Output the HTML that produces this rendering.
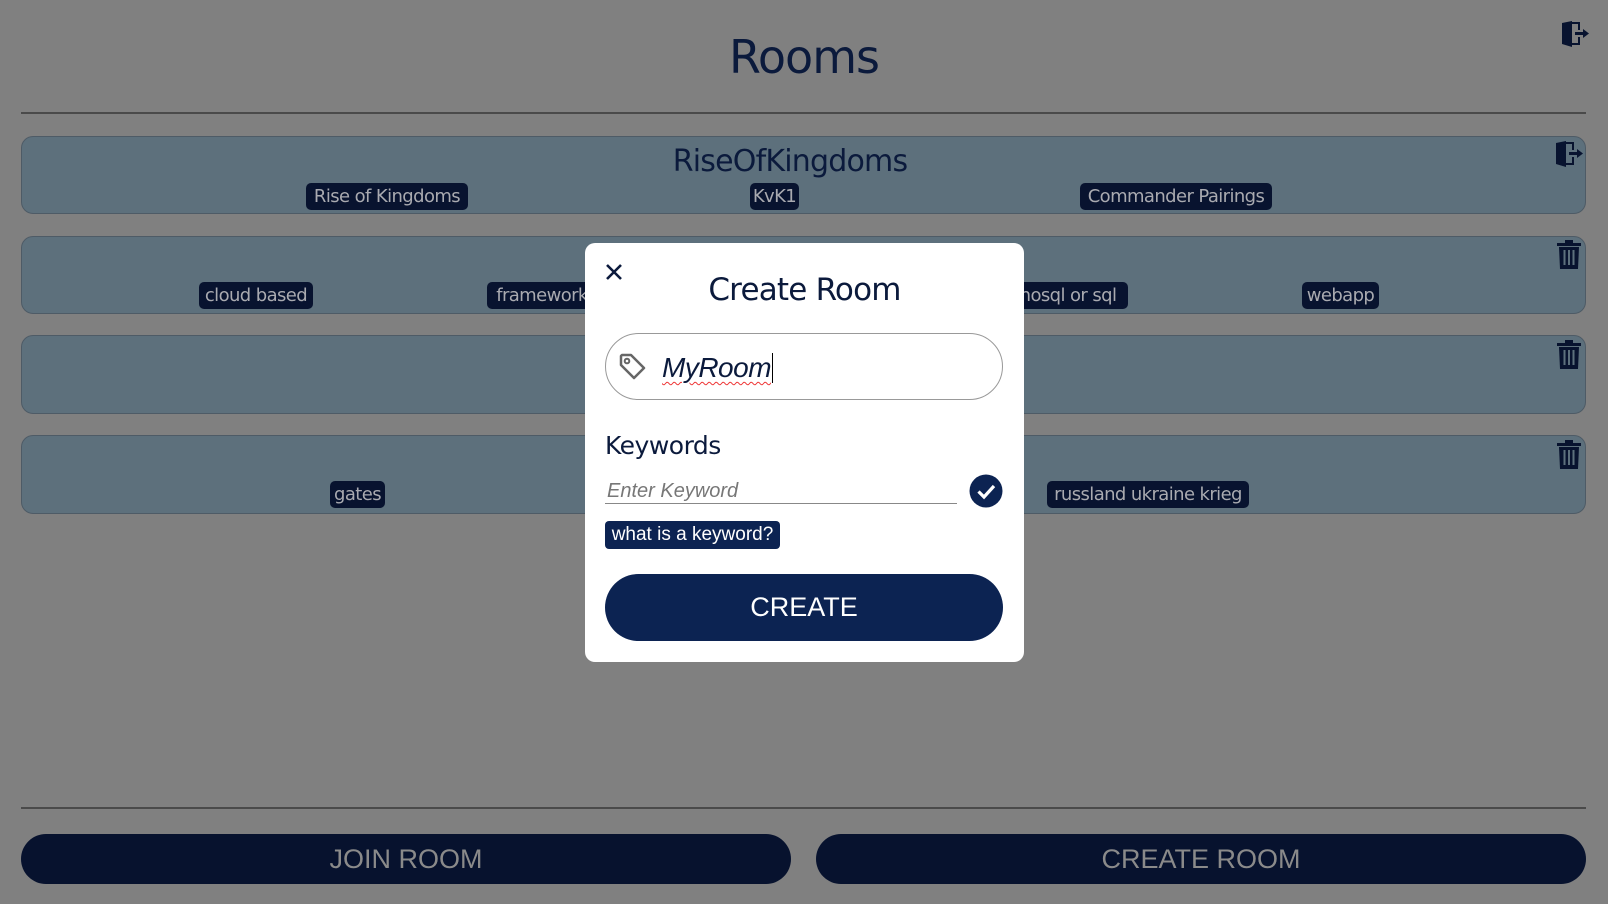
<!DOCTYPE html>
<html><head><meta charset="utf-8"><style>
body{margin:0;width:1608px;height:904px;background:#808080;font-family:"Liberation Sans",sans-serif;position:relative;overflow:hidden}
.a{position:absolute}
.title{left:0;width:1608px;text-align:center;top:30px;font-size:46px;color:#0b1a3c;font-family:"DejaVu Sans","Liberation Sans",sans-serif;letter-spacing:-1px}
.hr{left:21px;width:1565px;height:2px;background:#4a4a4a}
.card{left:21px;width:1563px;background:#5d707c;border:1px solid #4e5b66;border-radius:12px}
.tag{background:#08132f;color:#a9aab0;border-radius:5px;font-size:18px;height:27px;line-height:27px;text-align:center;font-family:"DejaVu Sans","Liberation Sans",sans-serif;letter-spacing:-0.6px}
.btn{background:#07122e;color:#8a8a8a;border-radius:25px;height:50px;line-height:50px;text-align:center;font-size:27px;top:834px}
</style></head><body>
<div class="a title">Rooms</div>
<svg class="a" style="left:1560px;top:20px" width="30" height="28" viewBox="0 0 30 28"><path d="M2 3 L12 1 V27 L2 24Z" fill="#08132f"/><path d="M12 3 H19 V10 M19 17 V24 H12" stroke="#08132f" stroke-width="2" fill="none"/><path d="M15 13.5 H25" stroke="#08132f" stroke-width="3"/><path d="M23 9 L29 13.5 L23 18Z" fill="#08132f"/></svg>
<div class="a hr" style="top:112px"></div>

<div class="a card" style="top:136px;height:76px"></div>
<div class="a" style="left:0;width:1580px;text-align:center;top:144px;font-size:30px;color:#0b1a3c;font-family:'DejaVu Sans',sans-serif;letter-spacing:-0.8px">RiseOfKingdoms</div>
<svg class="a" style="left:1554px;top:140px" width="30" height="28" viewBox="0 0 30 28"><path d="M2 3 L12 1 V27 L2 24Z" fill="#08132f"/><path d="M12 3 H19 V10 M19 17 V24 H12" stroke="#08132f" stroke-width="2" fill="none"/><path d="M15 13.5 H25" stroke="#08132f" stroke-width="3"/><path d="M23 9 L29 13.5 L23 18Z" fill="#08132f"/></svg>
<div class="a tag" style="left:306px;width:162px;top:183px">Rise of Kingdoms</div>
<div class="a tag" style="left:750px;width:49px;top:183px">KvK1</div>
<div class="a tag" style="left:1080px;width:192px;top:183px">Commander Pairings</div>

<div class="a card" style="top:236px;height:76px"></div>
<div class="a tag" style="left:199px;width:114px;top:282px">cloud based</div>
<div class="a tag" style="left:487px;width:110px;top:282px">framework</div>
<div class="a tag" style="left:1008px;width:120px;top:282px">nosql or sql</div>
<div class="a tag" style="left:1302px;width:77px;top:282px">webapp</div>

<div class="a card" style="top:335px;height:77px"></div>
<div class="a card" style="top:435px;height:77px"></div>
<div class="a tag" style="left:330px;width:55px;top:481px">gates</div>
<div class="a tag" style="left:1047px;width:202px;top:481px">russland ukraine krieg</div>

<svg class="a" style="left:1557px;top:240px" width="24" height="29" viewBox="0 0 24 29"><rect x="0" y="3" width="24" height="3" fill="#08132f"/><rect x="8" y="0" width="8" height="4" fill="#08132f"/><path d="M2 7 H22 L21 29 H3Z" fill="#08132f"/><path d="M7.5 10 V25 M12 10 V25 M16.5 10 V25" stroke="#5d707c" stroke-width="2"/></svg>
<svg class="a" style="left:1557px;top:340px" width="24" height="29" viewBox="0 0 24 29"><rect x="0" y="3" width="24" height="3" fill="#08132f"/><rect x="8" y="0" width="8" height="4" fill="#08132f"/><path d="M2 7 H22 L21 29 H3Z" fill="#08132f"/><path d="M7.5 10 V25 M12 10 V25 M16.5 10 V25" stroke="#5d707c" stroke-width="2"/></svg>
<svg class="a" style="left:1557px;top:440px" width="24" height="29" viewBox="0 0 24 29"><rect x="0" y="3" width="24" height="3" fill="#08132f"/><rect x="8" y="0" width="8" height="4" fill="#08132f"/><path d="M2 7 H22 L21 29 H3Z" fill="#08132f"/><path d="M7.5 10 V25 M12 10 V25 M16.5 10 V25" stroke="#5d707c" stroke-width="2"/></svg>

<div class="a hr" style="top:807px"></div>
<div class="a btn" style="left:21px;width:770px">JOIN ROOM</div>
<div class="a btn" style="left:816px;width:770px">CREATE ROOM</div>

<!-- modal -->
<div class="a" style="left:585px;top:243px;width:439px;height:419px;background:#fff;border-radius:10px"></div>
<svg class="a" style="left:605px;top:263px" width="18" height="18" viewBox="0 0 18 18"><path d="M2 2 L16 16 M16 2 L2 16" stroke="#0b1a3c" stroke-width="2.6"/></svg>
<div class="a" style="left:585px;width:439px;text-align:center;top:272px;font-size:31px;color:#0b1a3c;font-family:'DejaVu Sans',sans-serif;letter-spacing:-0.8px">Create Room</div>
<div class="a" style="left:605px;top:333px;width:396px;height:65px;border:1px solid #999;border-radius:34px"></div>
<svg class="a" style="left:618px;top:352px" width="30" height="30" viewBox="0 0 30 30"><path d="M3 4 V13 L16 26 L26 16 L13 3 H4Z" fill="none" stroke="#666" stroke-width="2.5" stroke-linejoin="round"/><circle cx="9" cy="9" r="2.3" fill="none" stroke="#666" stroke-width="2"/></svg>
<div class="a" style="left:662px;top:352px;font-size:28px;font-style:italic;color:#0b1a3c;letter-spacing:-0.5px"><span style="text-decoration:underline wavy #e33;text-decoration-thickness:1px;text-underline-offset:4px">MyRoom</span><span style="display:inline-block;width:1px;height:30px;background:#000;vertical-align:-6px;margin-left:1px"></span></div>
<div class="a" style="left:605px;top:431px;font-size:25px;color:#0b1a3c;font-family:'DejaVu Sans',sans-serif;letter-spacing:-0.5px">Keywords</div>
<div class="a" style="left:607px;top:480px;font-size:20px;font-style:italic;color:#777">Enter Keyword</div>
<div class="a" style="left:605px;top:503px;width:352px;height:1px;background:#888"></div>
<svg class="a" style="left:969px;top:474px" width="34" height="34" viewBox="0 0 34 34"><circle cx="17" cy="17" r="16.5" fill="#0c2352"/><path d="M9.5 17.5 L15 23 L25 12" stroke="#fff" stroke-width="3.2" fill="none"/></svg>
<div class="a" style="left:605px;top:521px;width:175px;height:28px;line-height:28px;background:#0c2352;color:#fff;border-radius:4px;text-align:center;font-size:19px">what is a keyword?</div>
<div class="a" style="left:605px;top:574px;width:398px;height:67px;line-height:67px;background:#0c2352;color:#fff;border-radius:34px;text-align:center;font-size:27px">CREATE</div>
</body></html>
